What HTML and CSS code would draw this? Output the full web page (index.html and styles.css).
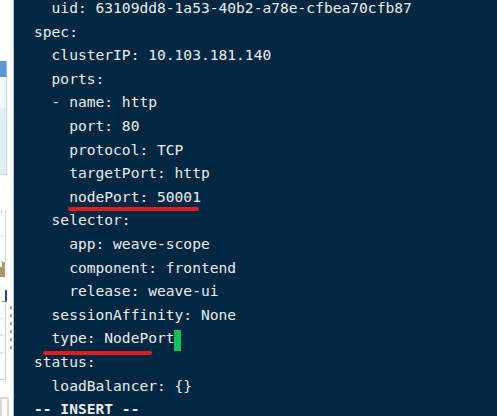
FILE: index.html
```html
<!DOCTYPE html>
<html>
<head>
<meta charset="utf-8">
<link rel="stylesheet" href="styles.css">
</head>
<body>
<div class="screen">
  <aside class="strip">
    <div class="sp sp-top"></div>
    <div class="blue-tab"></div>
    <div class="panel">
      <div class="panel-top"></div>
      <div class="panel-fill"></div>
    </div>
    <div class="sp sp-mid"></div>
    <div class="chart">
      <div class="chart-axis">
        <i class="dot"></i><i class="dot"></i><i class="dot"></i>
      </div>
      <div class="bars">
        <i class="bar bar1"></i><i class="bar bar2"></i>
      </div>
    </div>
    <div class="bracket"></div>
    <div class="list">
      <div class="list-box">
        <i class="dot"></i><i class="dot"></i><i class="dot"></i>
      </div>
      <div class="list-dots">
        <i class="gdot"></i><i class="gdot"></i><i class="gdot"></i><i class="gdot"></i><i class="gdot"></i><i class="gdot"></i>
      </div>
    </div>
    <div class="sp sp-low"></div>
    <div class="bottom-box"></div>
  </aside>
  <main class="term">
    <div class="lines">
      <div class="ln">  uid: 63109dd8-1a53-40b2-a78e-cfbea70cfb87</div>
      <div class="ln">spec:</div>
      <div class="ln">  clusterIP: 10.103.181.140</div>
      <div class="ln">  ports:</div>
      <div class="ln">  - name: http</div>
      <div class="ln">    port: 80</div>
      <div class="ln">    protocol: TCP</div>
      <div class="ln">    targetPort: http</div>
      <div class="ln mark">    nodePort: 50001<span class="ink ink-node"></span></div>
      <div class="ln">  selector:</div>
      <div class="ln">    app: weave-scope</div>
      <div class="ln">    component: frontend</div>
      <div class="ln">    release: weave-ui</div>
      <div class="ln">  sessionAffinity: None</div>
      <div class="ln mark">  type: NodePort<span class="cursor"></span><span class="ink ink-type"></span></div>
      <div class="ln">status:</div>
      <div class="ln">  loadBalancer: {}</div>
      <div class="ln mode">-- INSERT --</div>
    </div>
  </main>
</div>
</body>
</html>
```

FILE: styles.css
```css
html, body {
  margin: 0;
  padding: 0;
  width: 497px;
  height: 416px;
  overflow: hidden;
  background: #012742;
}

.screen {
  display: flex;
  width: 497px;
  height: 416px;
}

/* left strip: sliver of another window */
.strip {
  width: 13px;
  flex: none;
  background: #ffffff;
  border-right: 1px solid #b9bcc0;
  display: flex;
  flex-direction: column;
  overflow: hidden;
}
.sp-top { height: 61px; }
.sp-mid { height: 35px; }
.sp-low { height: 17px; }

.blue-tab {
  width: 6px;
  height: 16px;
  background: #5b98d6;
  border-right: 1px solid #8fbbe4;
}

.panel {
  width: 6px;
  height: 97px;
  border-right: 1px solid #c3dbea;
  border-bottom: 1px solid #c3dbea;
  display: flex;
  flex-direction: column;
}
.panel-top { height: 31px; background: #f4f9fc; }
.panel-fill { flex: 1; background: #e3f0f7; }

.chart {
  height: 67px;
  position: relative;
  display: flex;
  flex-direction: column;
  justify-content: space-between;
}
.chart-axis {
  width: 5px;
  height: 52px;
  border-right: 1px solid #d2dce6;
  display: flex;
  flex-direction: column;
  justify-content: space-between;
  padding-top: 1px;
}
.dot {
  display: block;
  width: 1px;
  height: 1px;
  margin-left: 1px;
  background: #8a96a2;
}
.bars {
  height: 15px;
  display: flex;
  align-items: flex-end;
  gap: 0;
}
.bar { display: block; background: #ad9667; }
.bar1 { width: 2px; height: 10px; }
.bar2 { width: 3px; height: 15px; }

.bracket {
  margin-top: 13px;
  width: 3px;
  height: 11px;
  margin-left: 2px;
  border-right: 2px solid #2c3f9c;
  border-bottom: 1px solid #d77a35;
  flex: none;
}

.list {
  display: flex;
  height: 78px;
  flex: none;
}
.list-box {
  width: 5px;
  border-right: 1px solid #c9d5df;
  border-bottom: 1px solid #c9d5df;
  display: flex;
  flex-direction: column;
  justify-content: space-around;
  padding: 8px 0 18px;
}
.list-dots {
  margin-left: 4px;
  display: flex;
  flex-direction: column;
  gap: 5px;
  padding-top: 4px;
}
.gdot {
  display: block;
  width: 2px;
  height: 3px;
  background: #a3a3a3;
}

.bottom-box {
  flex: 1;
  width: 5px;
  border: 2px solid #d9d9d9;
  border-bottom: none;
}

/* terminal */
.term {
  flex: 1;
  background: #012742;
  color: #ececec;
  font-family: "DejaVu Sans Mono", "Liberation Mono", monospace;
  font-size: 14.6px;
  overflow: hidden;
}
.lines {
  margin-top: -4px;
  padding-left: 20px;
}
.ln {
  white-space: pre;
  height: 23.6px;
  line-height: 23.6px;
}
.mark { position: relative; }
.mode { font-weight: bold; }

.cursor {
  display: inline-block;
  width: 7px;
  height: 21px;
  margin-left: -1px;
  background: #18c05a;
  vertical-align: -8px;
}

.ink {
  position: absolute;
  height: 4px;
  border-radius: 2px;
  background: #e21d1f;
}
.ink-node {
  left: 34px;
  width: 131px;
  top: 22px;
}
.ink-type {
  left: 9px;
  width: 109px;
  top: 25px;
}
```
